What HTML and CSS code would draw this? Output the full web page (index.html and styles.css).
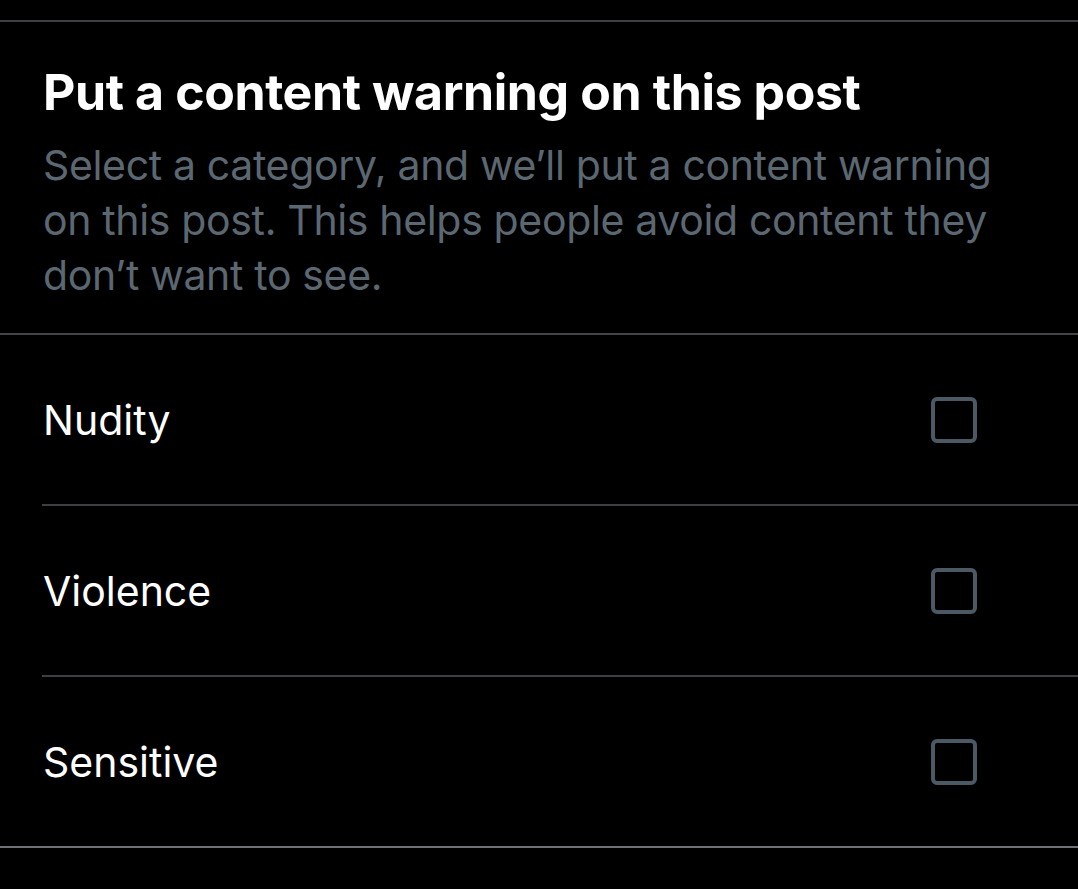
FILE: index.html
```html
<!DOCTYPE html>
<html lang="en">
<head>
<meta charset="utf-8">
<link rel="stylesheet" href="styles.css">
</head>
<body>
<div class="sheet">
  <div class="top-rule"></div>
  <header class="intro">
    <h1 class="title">Put a content warning on this post</h1>
    <p class="desc">Select a category, and we’ll put a content warning on this post. This helps people avoid content they don’t want to see.</p>
  </header>
  <div class="section-rule"></div>
  <ul class="options">
    <li class="option">
      <span class="label">Nudity</span>
      <span class="box"></span>
    </li>
    <li class="option">
      <span class="label">Violence</span>
      <span class="box"></span>
    </li>
    <li class="option last">
      <span class="label">Sensitive</span>
      <span class="box"></span>
    </li>
  </ul>
  <div class="bottom-rule"></div>
</div>
</body>
</html>
```

FILE: styles.css
```css
html, body {
  margin: 0;
  padding: 0;
  background: #000;
}
body {
  font-family: Inter, "Noto Sans", sans-serif;
  color: #e7e9ea;
}
.sheet {
  display: flex;
  flex-direction: column;
  padding-top: 20px;
}
.top-rule {
  height: 2px;
  background: #3f3e46;
}
.intro {
  padding: 37px 60px 0 43px;
  height: 311px;
  box-sizing: border-box;
}
.title {
  margin: 0;
  font-size: 50px;
  line-height: 66px;
  font-weight: 700;
  color: #ffffff;
  letter-spacing: -0.4px;
}
.desc {
  margin: 13px 0 0;
  font-size: 41px;
  line-height: 55px;
  font-weight: 400;
  color: #5b6771;
  letter-spacing: -0.35px;
}
.section-rule {
  height: 2px;
  background: #444446;
}
.options {
  list-style: none;
  margin: 0;
  padding: 0;
}
.option {
  height: 169px;
  display: flex;
  align-items: center;
  justify-content: space-between;
  padding: 0 101px 0 1px;
  margin-left: 42px;
  border-bottom: 2px solid #3e3f43;
}
.option.last {
  border-bottom: none;
}
.label {
  font-size: 41px;
  font-weight: 400;
  color: #ffffff;
}
.box {
  width: 46px;
  height: 46px;
  box-sizing: border-box;
  border: 4px solid #4a5964;
  border-radius: 6px;
}
.bottom-rule {
  height: 2px;
  background: #6e7175;
}
```
